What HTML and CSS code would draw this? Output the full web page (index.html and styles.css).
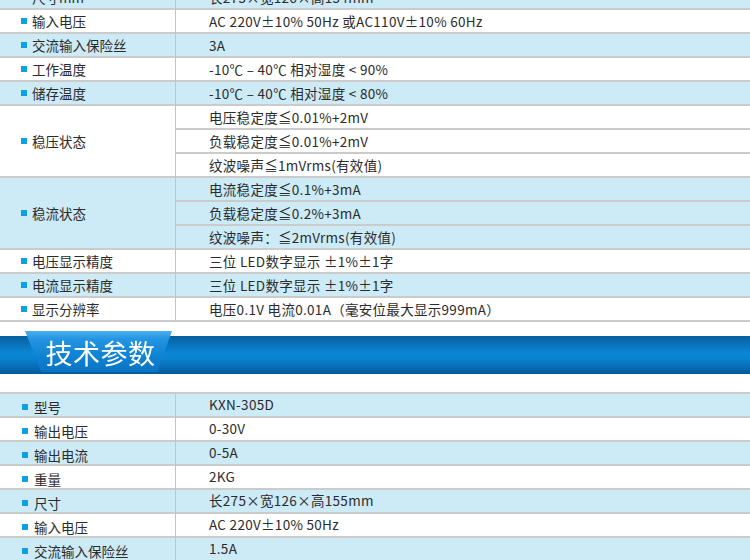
FILE: index.html
```html
<!DOCTYPE html>
<html lang="zh">
<head>
<meta charset="utf-8">
<title>技术参数</title>
<link rel="stylesheet" href="styles.css">
</head>
<body>
<div class="spec spec-top">
  <div class="lab b"><i></i>尺寸mm</div><div class="val b">长275×宽126×高154mm</div>
  <div class="lab"><i></i>输入电压</div><div class="val">AC 220V±10% 50Hz 或AC110V±10% 60Hz</div>
  <div class="lab b"><i></i>交流输入保险丝</div><div class="val b">3A</div>
  <div class="lab"><i></i>工作温度</div><div class="val">-10℃ – 40℃ 相对湿度 &lt; 90%</div>
  <div class="lab b"><i></i>储存温度</div><div class="val b">-10℃ – 40℃ 相对湿度 &lt; 80%</div>
  <div class="lab span3"><i></i>稳压状态</div>
  <div class="val">电压稳定度≦0.01%+2mV</div>
  <div class="val">负载稳定度≦0.01%+2mV</div>
  <div class="val">纹波噪声≦1mVrms(有效值)</div>
  <div class="lab span3 b"><i></i>稳流状态</div>
  <div class="val b">电流稳定度≦0.1%+3mA</div>
  <div class="val b">负载稳定度≦0.2%+3mA</div>
  <div class="val b">纹波噪声：≦2mVrms(有效值)</div>
  <div class="lab"><i></i>电压显示精度</div><div class="val">三位 LED数字显示 ±1%±1字</div>
  <div class="lab b"><i></i>电流显示精度</div><div class="val b">三位 LED数字显示 ±1%±1字</div>
  <div class="lab"><i></i>显示分辨率</div><div class="val">电压0.1V 电流0.01A（毫安位最大显示999mA）</div>
</div>

<div class="banner">
  <div class="tab"><span>技术参数</span></div>
</div>

<div class="spec spec-bottom">
  <div class="lab b"><i></i>型号</div><div class="val b">KXN-305D</div>
  <div class="lab"><i></i>输出电压</div><div class="val">0-30V</div>
  <div class="lab b"><i></i>输出电流</div><div class="val b">0-5A</div>
  <div class="lab"><i></i>重量</div><div class="val">2KG</div>
  <div class="lab b"><i></i>尺寸</div><div class="val b">长275×宽126×高155mm</div>
  <div class="lab"><i></i>输入电压</div><div class="val">AC 220V±10% 50Hz</div>
  <div class="lab b"><i></i>交流输入保险丝</div><div class="val b">1.5A</div>
</div>
</body>
</html>
```

FILE: styles.css
```css
html, body {
  margin: 0;
  padding: 0;
  background: #ffffff;
}
body {
  width: 750px;
  height: 560px;
  overflow: hidden;
  font-family: "Noto Sans CJK SC", "Noto Sans", sans-serif;
  font-size: 13.5px;
  color: #2b2b2b;
}
.spec {
  display: grid;
  grid-template-columns: 176px 1fr;
}
.spec-top {
  margin-top: -14px;
}
.lab, .val {
  box-sizing: border-box;
  height: 24px;
  display: flex;
  align-items: center;
  border-bottom: 2px solid #cbcbcb;
  background: #ffffff;
  white-space: nowrap;
}
.lab {
  padding-left: 21px;
  gap: 5px;
  border-right: 1px solid #c4c4c4;
}
.lab i {
  display: block;
  width: 6px;
  height: 6px;
  background: #0d9fe3;
}
.val {
  padding-left: 33px;
  letter-spacing: 0.3px;
}
.span3 {
  grid-row: span 3;
  height: 72px;
}
.b {
  background: #cdeaf7;
}
.banner {
  margin-top: 14px;
  height: 38px;
  display: flex;
  background: linear-gradient(#07609f 0%, #0a74bd 25%, #0b86d6 45%, #0a80cf 62%, #0769b2 85%, #055a97 100%);
}
.tab {
  margin-left: 25px;
  margin-top: -5px;
  width: 147px;
  height: 41px;
  clip-path: polygon(0 0, 100% 0, 90% 100%, 11% 100%);
  background: linear-gradient(#4aaef0 0%, #2394e2 20%, #0f83d4 60%, #0a74c2 100%);
  display: flex;
  align-items: center;
  justify-content: center;
  filter: drop-shadow(0 3px 3px rgba(0, 0, 0, 0.25));
}
.tab span {
  color: #ffffff;
  font-size: 27px;
  line-height: 1;
  margin-left: 4px;
  margin-top: 1px;
  letter-spacing: 0.5px;
}
.spec-bottom {
  margin-top: 18px;
  border-top: 2px solid #cbcbcb;
}
.spec-bottom .lab {
  padding-left: 22px;
  gap: 6px;
  padding-top: 3px;
}
.spec-bottom .val {
  padding-bottom: 3px;
}
```
